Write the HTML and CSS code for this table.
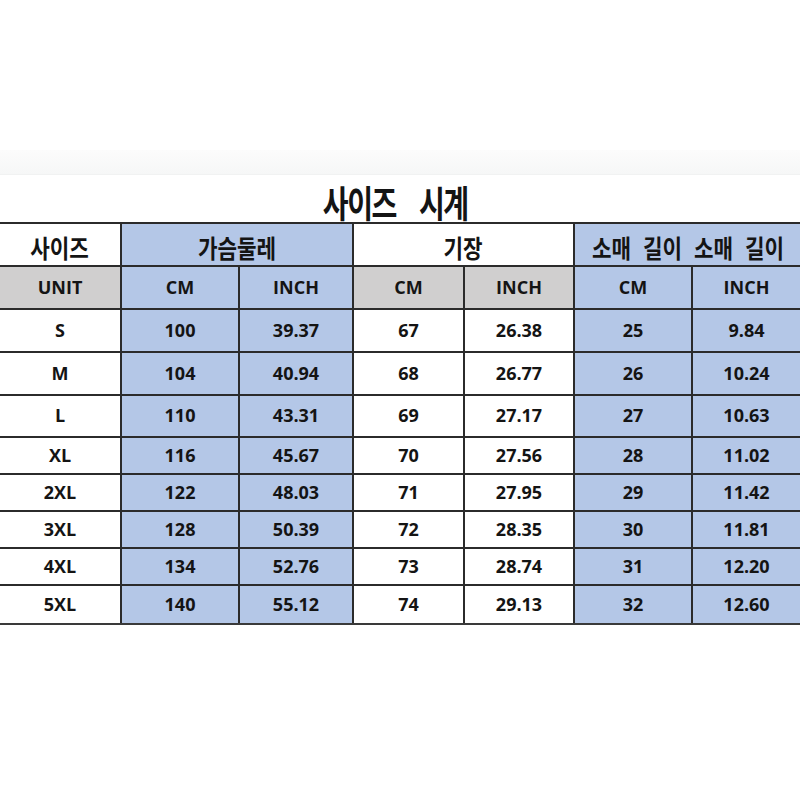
FILE: index.html
```html
<!DOCTYPE html>
<html lang="ko">
<head>
<meta charset="utf-8">
<title>사이즈 시계</title>
<link rel="stylesheet" href="styles.css">
</head>
<body>
<div class="page">
  <div class="band"></div>
  <div class="title"><span class="ko">사이즈 시계</span></div>
  <div class="grid">
    <div class="c h"><span class="ko">사이즈</span></div>
    <div class="c h blue span2"><span class="ko">가슴둘레</span></div>
    <div class="c h span2"><span class="ko">기장</span></div>
    <div class="c h blue span2"><span class="ko">소매 길이 소매 길이</span></div>

    <div class="c grey">UNIT</div>
    <div class="c blue">CM</div><div class="c blue">INCH</div>
    <div class="c grey">CM</div><div class="c grey">INCH</div>
    <div class="c blue">CM</div><div class="c blue">INCH</div>

    <div class="c">S</div><div class="c blue">100</div><div class="c blue">39.37</div><div class="c">67</div><div class="c">26.38</div><div class="c blue">25</div><div class="c blue">9.84</div>
    <div class="c">M</div><div class="c blue">104</div><div class="c blue">40.94</div><div class="c">68</div><div class="c">26.77</div><div class="c blue">26</div><div class="c blue">10.24</div>
    <div class="c">L</div><div class="c blue">110</div><div class="c blue">43.31</div><div class="c">69</div><div class="c">27.17</div><div class="c blue">27</div><div class="c blue">10.63</div>
    <div class="c">XL</div><div class="c blue">116</div><div class="c blue">45.67</div><div class="c">70</div><div class="c">27.56</div><div class="c blue">28</div><div class="c blue">11.02</div>
    <div class="c">2XL</div><div class="c blue">122</div><div class="c blue">48.03</div><div class="c">71</div><div class="c">27.95</div><div class="c blue">29</div><div class="c blue">11.42</div>
    <div class="c">3XL</div><div class="c blue">128</div><div class="c blue">50.39</div><div class="c">72</div><div class="c">28.35</div><div class="c blue">30</div><div class="c blue">11.81</div>
    <div class="c">4XL</div><div class="c blue">134</div><div class="c blue">52.76</div><div class="c">73</div><div class="c">28.74</div><div class="c blue">31</div><div class="c blue">12.20</div>
    <div class="c">5XL</div><div class="c blue">140</div><div class="c blue">55.12</div><div class="c">74</div><div class="c">29.13</div><div class="c blue">32</div><div class="c blue">12.60</div>
  </div>
</div>
</body>
</html>
```

FILE: styles.css
```css
html, body {
  margin: 0;
  padding: 0;
  background: #ffffff;
}

.page {
  width: 800px;
  height: 800px;
  padding-top: 150px;
  box-sizing: border-box;
  font-family: "Open Sans", "Noto Sans CJK KR", sans-serif;
  color: #141414;
  overflow: hidden;
}

.band {
  height: 24px;
  background: linear-gradient(#fcfcfc, #f6f7f7);
  border-bottom: 1px solid #f1f2f2;
}

.title {
  height: 47px;
  display: flex;
  align-items: center;
  justify-content: center;
}

.title .ko {
  font-family: "Noto Sans CJK KR", sans-serif;
  font-weight: 700;
  font-size: 37px;
  letter-spacing: -2px;
  word-spacing: 22px;
  display: inline-block;
  transform: scaleX(0.76);
  line-height: 1;
  white-space: nowrap;
  margin-top: 8px;
  margin-left: -10px;
}

.grid {
  display: grid;
  grid-template-columns: 120px 116px 112px 109px 108px 116px 107px;
  grid-template-rows: 41px 41px 41px 41px 40px 35px 35px 35px 35px 37px;
  gap: 2px;
  background: #2b2b2b;
  border-top: 2px solid #2b2b2b;
  border-bottom: 2px solid #3a3a3a;
  width: 800px;
}

.c {
  background: #ffffff;
  display: flex;
  align-items: center;
  justify-content: center;
  font-weight: 700;
  font-size: 18px;
  padding-bottom: 2px;
  box-sizing: border-box;
}

.span2 {
  grid-column: span 2;
}

.blue {
  background: #b4c7e7;
}

.grey {
  background: #d0cfcf;
}

.h {
  padding-bottom: 0;
}

.h .ko {
  font-family: "Noto Sans CJK KR", sans-serif;
  font-weight: 700;
  font-size: 25px;
  word-spacing: 7px;
  display: inline-block;
  transform: scaleX(0.85);
  white-space: nowrap;
  line-height: 1;
  margin-top: 6px;
}
```
